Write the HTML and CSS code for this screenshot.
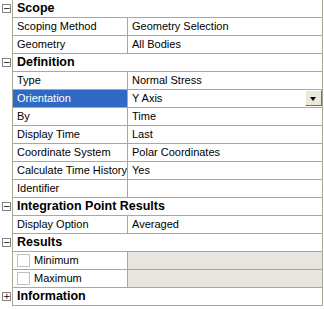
FILE: index.html
```html
<!DOCTYPE html>
<html lang="en">
<head>
    <meta charset="UTF-8">
    <title>Details</title>
    <link rel="stylesheet" href="styles.css">
</head>
<body>
    <div class="grid">
        <div class="row group">
            <span class="toggle">&minus;</span>
            <div class="title">Scope</div>
        </div>
        <div class="row">
            <span class="gutter"></span>
            <div class="label">Scoping Method</div>
            <div class="value">Geometry Selection</div>
        </div>
        <div class="row">
            <span class="gutter"></span>
            <div class="label">Geometry</div>
            <div class="value">All Bodies</div>
        </div>

        <div class="row group">
            <span class="toggle">&minus;</span>
            <div class="title">Definition</div>
        </div>
        <div class="row">
            <span class="gutter"></span>
            <div class="label">Type</div>
            <div class="value">Normal Stress</div>
        </div>
        <div class="row selected">
            <span class="gutter"></span>
            <div class="label">Orientation</div>
            <div class="value">Y Axis<span class="drop"><span class="arrow"></span></span></div>
        </div>
        <div class="row">
            <span class="gutter"></span>
            <div class="label">By</div>
            <div class="value">Time</div>
        </div>
        <div class="row">
            <span class="gutter"></span>
            <div class="label">Display Time</div>
            <div class="value">Last</div>
        </div>
        <div class="row">
            <span class="gutter"></span>
            <div class="label">Coordinate System</div>
            <div class="value">Polar Coordinates</div>
        </div>
        <div class="row">
            <span class="gutter"></span>
            <div class="label">Calculate Time History</div>
            <div class="value">Yes</div>
        </div>
        <div class="row">
            <span class="gutter"></span>
            <div class="label">Identifier</div>
            <div class="value"></div>
        </div>

        <div class="row group">
            <span class="toggle">&minus;</span>
            <div class="title">Integration Point Results</div>
        </div>
        <div class="row">
            <span class="gutter"></span>
            <div class="label">Display Option</div>
            <div class="value">Averaged</div>
        </div>

        <div class="row group">
            <span class="toggle">&minus;</span>
            <div class="title">Results</div>
        </div>
        <div class="row">
            <span class="gutter"></span>
            <div class="label"><span class="check"></span>Minimum</div>
            <div class="value disabled"></div>
        </div>
        <div class="row">
            <span class="gutter"></span>
            <div class="label"><span class="check"></span>Maximum</div>
            <div class="value disabled"></div>
        </div>

        <div class="row group">
            <span class="toggle">+</span>
            <div class="title">Information</div>
        </div>
    </div>
</body>
</html>
```

FILE: styles.css
```css
body {
    margin: 0;
    background-color: #fff;
    font-family: Tahoma, "Liberation Sans", sans-serif;
    font-size: 11px;
    color: #000;
}
.grid {
    width: 323px;
}
.row {
    display: grid;
    grid-template-columns: 12px 115px minmax(0, 1fr);
    height: 18px;
}
.row.group {
    grid-template-columns: 12px minmax(0, 1fr);
}
.gutter,
.toggle {
    background-color: #fff;
}
.toggle {
    width: 7px;
    height: 7px;
    margin: 4px 0 0 2px;
    border: 1px solid #848284;
    font-family: "DejaVu Sans", sans-serif;
    font-size: 9px;
    line-height: 7px;
    text-align: center;
    color: #000;
}
.label,
.value,
.title {
    min-width: 0;
    border-left: 1px solid #aca899;
    border-bottom: 1px solid #aca899;
    padding-left: 4px;
    line-height: 17px;
    white-space: nowrap;
    overflow: hidden;
}
.value {
    position: relative;
    border-right: 1px solid #aca899;
}
.title {
    border-right: 1px solid #aca899;
    font-weight: bold;
    font-size: 12.5px;
}
.selected .label {
    background-color: #316ac5;
    color: #fff;
}
.value.disabled {
    background-color: #e7e5e0;
}
.check {
    display: inline-block;
    width: 11px;
    height: 11px;
    margin: 2px 4px 0 0;
    border: 1px solid #c3c1bb;
    background-color: #fff;
    vertical-align: top;
}
.drop {
    position: absolute;
    top: 0;
    right: 0;
    width: 15px;
    height: 14px;
    background-color: #ece9d8;
    border-top: 1px solid #fff;
    border-left: 1px solid #fff;
    border-right: 1px solid #716f64;
    border-bottom: 1px solid #716f64;
}
.arrow {
    position: absolute;
    left: 4px;
    top: 6px;
    border-left: 3.5px solid transparent;
    border-right: 3.5px solid transparent;
    border-top: 4px solid #000;
}
```
